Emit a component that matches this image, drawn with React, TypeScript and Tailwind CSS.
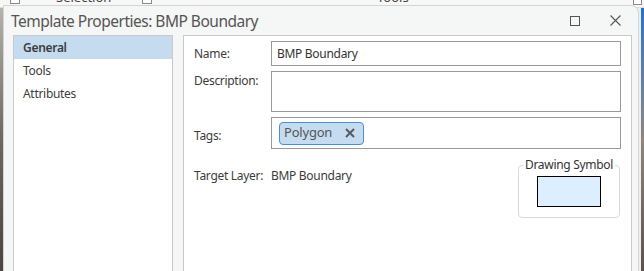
import React from 'react';

const font = { fontFamily: '"Noto Sans", "Open Sans", sans-serif' };

const NavItem = ({ label, active = false }: { label: string; active?: boolean }) => (
  <div
    className={`h-[23px] flex items-center pl-[9px] text-[12px] tracking-[-0.3px] ${
      active ? 'bg-[#c5dcf0] font-semibold text-[#3c3c3c]' : 'text-[#3c3c3c]'
    }`}
  >
    {label}
  </div>
);

const App: React.FC = () => {
  return (
    <div className="relative w-[644px] h-[271px] overflow-hidden bg-[#eeeeee]" style={font}>
      {/* app behind the dialog */}
      <div className="absolute left-0 top-0 w-[644px] h-[8px] bg-[#f7f7f7] border-b border-[#dddddd]">
        <div className="absolute left-[10px] top-[-6px] w-[10px] h-[10px] border border-[#8a8a8a] bg-white" />
        <div className="absolute left-[56px] top-[-11px] text-[13px] leading-[16px] text-[#444]">Selection</div>
        <div className="absolute left-[142px] top-[-6px] w-[10px] h-[10px] border border-[#8a8a8a] bg-white" />
        <div className="absolute left-[377px] top-[-11px] text-[13px] leading-[16px] text-[#444]">Tools</div>
        <div className="absolute left-[633px] top-[-4px] w-[9px] h-[9px] border border-[#8a8a8a] bg-white" />
      </div>
      <div className="absolute left-0 top-[8px] w-[3px] h-[263px] bg-gradient-to-b from-[#b9b2ac] via-[#6f6760] to-[#4a4540]" />
      <div className="absolute left-[641px] top-[8px] w-[3px] h-[263px] bg-gradient-to-b from-[#1a73d0] via-[#8d857e] to-[#5a534d]" />

      {/* dialog */}
      <div className="absolute left-[3px] top-[5px] w-[636px] h-[280px] bg-[#f5f6f6] rounded-tr-[8px] border border-[#d4d4d4] flex flex-col">
        <div className="h-[29px] flex items-center justify-between pl-[7px] pr-[17px]">
          <div className="text-[15.5px] text-[#555555] tracking-[-0.5px] pt-[2px]">Template Properties: BMP Boundary</div>
          <div className="flex items-center gap-[30px]">
            <div className="w-[10px] h-[10px] border border-[#555]" />
            <svg width="11" height="11" viewBox="0 0 11 11" className="text-[#555]">
              <path d="M0.5 0.5 L10.5 10.5 M10.5 0.5 L0.5 10.5" stroke="currentColor" strokeWidth="1.1" />
            </svg>
          </div>
        </div>

        <div className="flex flex-1 pl-[9px] pr-[6px]">
          <div className="w-[160px] bg-white border border-[#c9c9c9] border-b-0">
            <NavItem label="General" active />
            <NavItem label="Tools" />
            <NavItem label="Attributes" />
          </div>

          <div className="ml-[10px] flex-1 bg-white border border-[#c9c9c9] border-b-0 pt-[5px] pl-[10px] pr-[10px] text-[12px] tracking-[-0.3px] text-[#3c3c3c]">
            <div className="flex items-center h-[25px]">
              <div className="w-[77px]">Name:</div>
              <div className="flex-1 h-[25px] border border-[#999999] flex items-center pl-[5px] text-[#333]">BMP Boundary</div>
            </div>
            <div className="flex mt-[5px]">
              <div className="w-[77px] pt-[1px]">Description:</div>
              <div className="flex-1 h-[41px] border border-[#999999]" />
            </div>
            <div className="flex items-center mt-[5px]">
              <div className="w-[77px] pt-[5px]">Tags:</div>
              <div className="flex-1 h-[32px] border border-[#999999] flex items-center pl-[7px]">
                <div className="h-[23px] flex items-center gap-[13px] pl-[4px] pr-[8px] bg-[#c5dcf0] border border-[#4a8fd0] rounded-[4px] text-[13px] tracking-[-0.2px] text-[#555]">
                  <span>Polygon</span>
                  <svg width="10" height="10" viewBox="0 0 10 10" className="text-[#5a5a5a]">
                    <path d="M1 1 L9 9 M9 1 L1 9" stroke="currentColor" strokeWidth="2" />
                  </svg>
                </div>
              </div>
            </div>

            <div className="flex justify-between mt-[10px]">
              <div className="flex pt-[8px]">
                <div className="w-[77px]">Target Layer:</div>
                <div>BMP Boundary</div>
              </div>
              <div className="relative shrink-0 w-[102px] h-[53px] mt-[6px] border border-[#d8d8d8] rounded-[4px] flex justify-center items-end pb-[10px] mr-[1px]">
                <div className="absolute top-[-10px] left-1/2 -translate-x-1/2 bg-white px-[2px] text-[12px] text-[#333] whitespace-nowrap">
                  Drawing Symbol
                </div>
                <div className="w-[64px] h-[31px] bg-[#ddefff] border-[1.5px] border-black" />
              </div>
            </div>
          </div>
        </div>
      </div>
    </div>
  );
};

export default App;
